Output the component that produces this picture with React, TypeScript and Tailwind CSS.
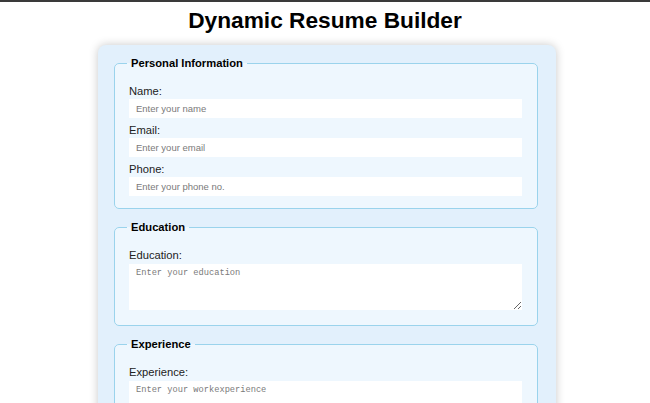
import React from 'react'

const inputCls =
  "block w-full h-[19px] mt-[1px] bg-white px-[7px] text-[9.5px] outline-none placeholder:text-[#7a7a7a]"
const areaCls =
  "block w-full h-[46px] mt-[2px] mb-[3px] bg-white px-[7px] pt-[4px] font-['Liberation_Mono',monospace] text-[8.7px] leading-[11px] outline-none placeholder:text-[#7a7a7a]"

function Section({ title, children }: { title: string; children: React.ReactNode }) {
  return (
    <fieldset className="w-full border border-[#9ad3ec] rounded-[5px] bg-[#eef7fe] pl-[14px] pr-[15px] pt-[14px] pb-[12px]">
      <legend className="-ml-[2px] px-[4px] text-[11.2px] leading-[14px] font-bold text-black">
        {title}
      </legend>
      {children}
    </fieldset>
  )
}

function Label({ text, first }: { text: string; first?: boolean }) {
  return (
    <label className={`block text-[11.2px] leading-[14px] text-[#222] ${first ? '' : 'mt-[5px]'}`}>
      {text}
    </label>
  )
}

export default function App() {
  return (
    <div className="min-h-screen bg-white border-t-2 border-[#3a3a3a] font-['Liberation_Sans',Arial,sans-serif] pb-[40px]">
      <h1 className="text-[22.7px] leading-[26px] font-bold text-center text-black pt-[5px]">
        Dynamic Resume Builder
      </h1>
      <div className="ml-[98px] mt-[12px] w-[458px] rounded-lg bg-[#e2f0fc] shadow-[0_0_10px_rgba(0,0,0,0.22)] pl-[16px] pr-[18px] pt-[11px] pb-[16px] flex flex-col gap-[11px]">
        <Section title="Personal Information">
          <Label text="Name:" first />
          <input className={inputCls} placeholder="Enter your name" />
          <Label text="Email:" />
          <input className={inputCls} placeholder="Enter your email" />
          <Label text="Phone:" />
          <input className={inputCls} placeholder="Enter your phone no." />
        </Section>
        <Section title="Education">
          <Label text="Education:" first />
          <textarea className={areaCls} placeholder="Enter your education" />
        </Section>
        <Section title="Experience">
          <Label text="Experience:" first />
          <textarea className={areaCls} placeholder="Enter your workexperience" />
        </Section>
      </div>
    </div>
  )
}
